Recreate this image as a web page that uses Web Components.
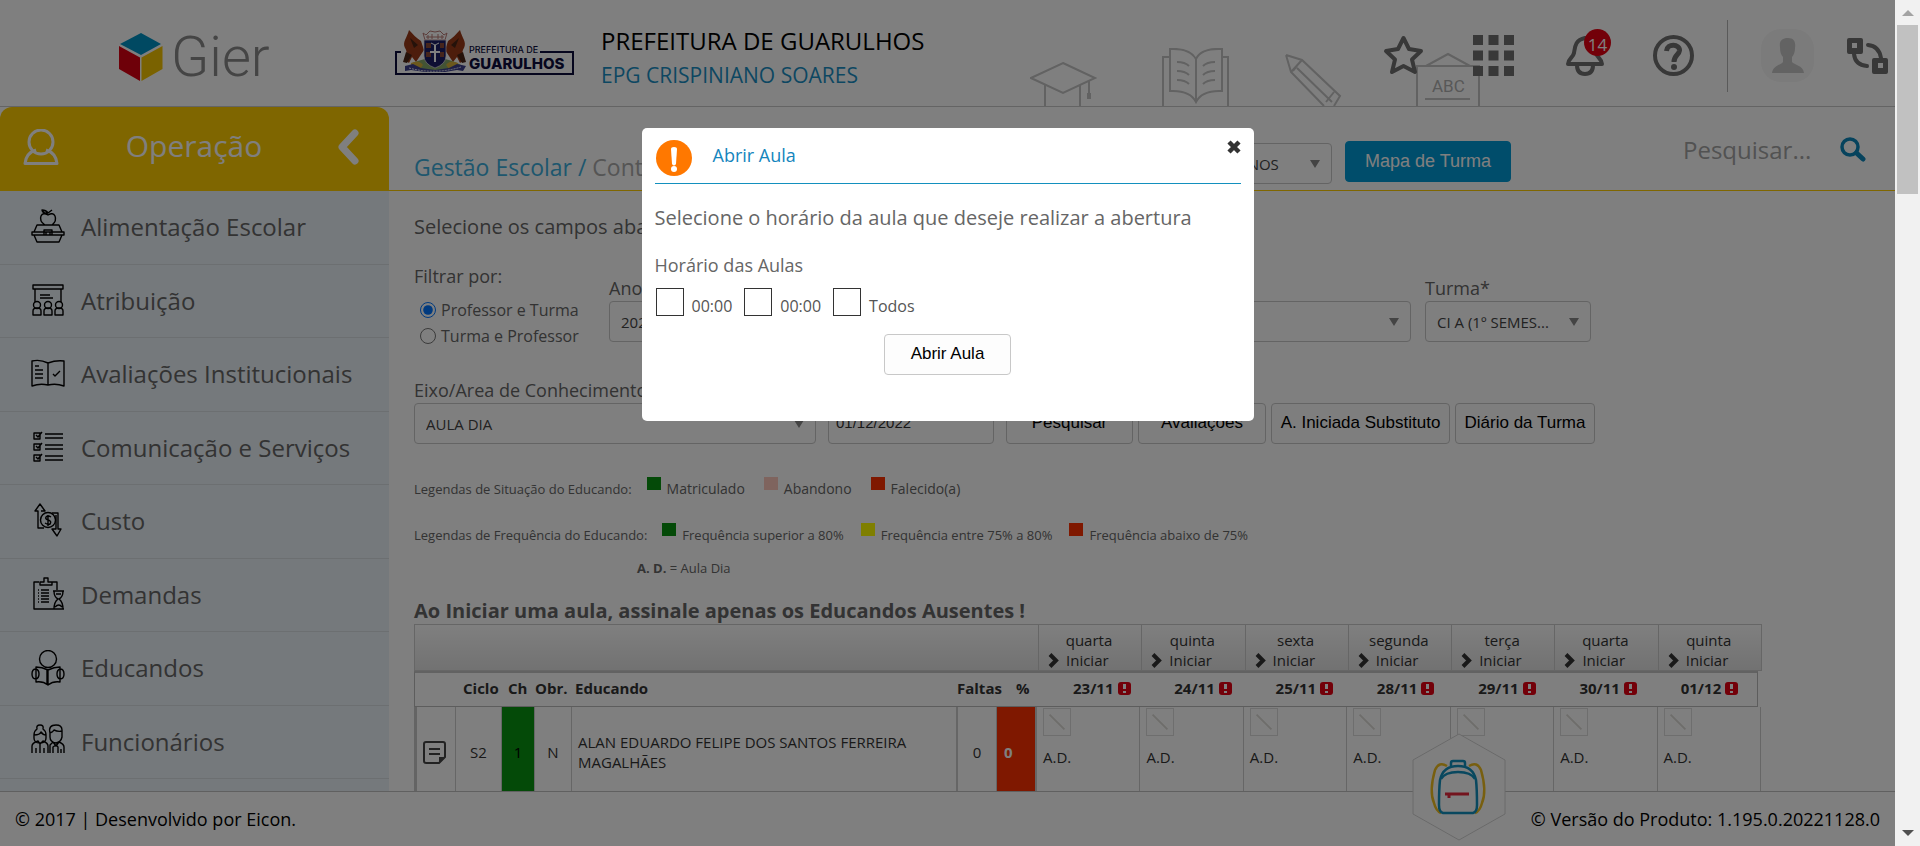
<!DOCTYPE html>
<html lang="pt-BR">
<head>
<meta charset="utf-8">
<title>Gier - Gestão Escolar</title>
<style>
html, body { margin: 0; height: 100%; }
body { font-family: "Open Sans", sans-serif; color: #666; background: #fff; overflow: hidden; }
</style>
</head>
<body>
<gier-app></gier-app>
<script>
const define = (name, html, setup) => {
  const tpl = document.createElement('template');
  tpl.innerHTML = '<style>*{box-sizing:border-box}button,input,select{font-family:inherit;margin:0}button{cursor:pointer}svg{display:block;fill:none}</style>' + html;
  customElements.define(name, class extends HTMLElement {
    constructor() {
      super();
      this.attachShadow({ mode: 'open' }).appendChild(tpl.content.cloneNode(true));
    }
    connectedCallback() { if (setup) setup(this, this.shadowRoot); }
  });
};

/* ---------- header ---------- */
define('gier-logo', `
<style>
:host { display: flex; align-items: center; gap: 8px; width: 153px; height: 48px; }
span { font: 300 56px/48px Roboto, sans-serif; color: #8a8a8a; }
</style>
<svg width="44" height="48" viewBox="0 0 44 48">
  <path fill="#0093c4" d="M22 0 42 11 22 22 1 11z"/>
  <path fill="#dc0012" d="M0 13 21 24.500V48L0 36z"/>
  <path fill="#f5c400" d="M43.500 13 22.500 24.500V48L43.500 36z"/>
</svg><span>Gier</span>`);

define('city-logo', `
<style>
:host { display: grid; grid-template-columns: 72px 1fr; width: 179px; height: 46px; position: relative; color: #0c0c3c; }
.frame { position: absolute; left: 0; top: 0; }
.name { grid-column: 2; align-self: end; display: flex; flex-direction: column; padding: 0 0 3px 2px; position: relative; }
small { font: 500 9px/11px Inter, sans-serif; white-space: nowrap; }
b { font: 800 15px/18px Inter, sans-serif; }
</style>
<svg class="frame" width="179" height="46" viewBox="0 0 179 46">
  <path stroke="#0c0c3c" stroke-width="2" d="M6 22H1V44H178V22H145"/>
  <path fill="#9a3a18" d="M14 0c4 4 7 8 12 11l3 9-8 12-4-5-3 6-4-3c2-7 2-9 0-12-3-6 2-10 4-18zM65 0c-4 4-7 8-12 11l-3 9 8 12 4-5 3 6 4-3c-2-7-2-9 0-12 3-6-2-10-4-18z"/>
  <path fill="#4a2414" d="M11 22l6 3-5 8-4-1zM68 22l-6 3 5 8 4-1zM15 8l8 7-4 3zM64 8l-8 7 4 3z"/>
  <path fill="#86a86a" d="M18 33q22-10 44 0l8 4-10 3H20l-8-2z"/>
  <path fill="#d6b13a" d="M16 33q8-4 12 2l-4 5h-8zM63 33q-8-4-12 2l4 5h8z"/>
  <path fill="#fff" stroke="#b87a75" d="M28 3l3 2 4-4 5 1 5-1 4 4 3-2-2 7H30z"/>
  <path stroke="#b87a75" d="M31 7h18M33 5v4M37 4v5M43 4v5M47 5v4"/>
  <path fill="#1c1f66" stroke="#e8e0e8" stroke-width=".7" d="M29 10h22v16q0 8-11 12-11-4-11-12z"/>
  <path fill="#8d4a38" d="M31 13h5v5h-5zM45 13h4v5h-4zM31 22h5v5h-5zM45 22h4v5h-4z"/>
  <path fill="#fff" d="M39 15h2v6h4v2h-4v9h-2v-9h-4v-2h4z"/>
  <path stroke="#fff" d="M36 13l4 2 4-2"/>
  <path fill="#3c3f8c" d="M10 36l8-2 8 4 14 2 14-2 8-4 9 2-3 5-6-1-12 2H30l-14-2-6 1z"/>
  <path stroke="#e8e8f4" stroke-dasharray="2 1" d="M14 38q26 7 52-1"/>
</svg>
<div class="name"><small>PREFEITURA DE</small><b>GUARULHOS</b></div>`);

define('gier-header', `
<style>
:host { display: flex; align-items: center; height: 107px; position: relative; border-bottom: 1px solid #c8c8c8; padding-right: 7px; }
gier-logo { margin-left: 119px; padding-top: 8px; }
city-logo { margin-left: 123px; }
.org { margin-left: 27px; display: flex; flex-direction: column; padding-top: 7px; }
h1 { margin: 0; font-size: 24px; line-height: 36px; font-weight: 400; color: #000; }
.org a { font-size: 21px; line-height: 32px; color: #1b8fc4; text-decoration: none; }
.decor { position: absolute; right: 415px; bottom: 0; stroke: #c4c4c4; stroke-width: 2; }
.tools { margin-left: auto; display: flex; align-items: center; gap: 33px; padding-top: 5px; position: relative; }
.group { display: flex; gap: 49px; }
button { border: 0; background: none; padding: 0; position: relative; display: block; }
hr { width: 1px; height: 72px; margin: 0; border: 0; background: #b4b4b4; }
.badge { position: absolute; left: 21px; top: -6px; width: 27px; height: 27px; border-radius: 50%; background: #e60012; color: #fff; font-size: 17px; line-height: 32px; text-align: center; }
</style>
<gier-logo></gier-logo>
<city-logo></city-logo>
<div class="org"><h1>PREFEITURA DE GUARULHOS</h1><a href="#">EPG CRISPINIANO SOARES</a></div>
<svg class="decor" width="450" height="58" viewBox="0 0 450 58">
  <path d="M33 15 65 30 33 45 1 30zM15 37V58M50 37V58M59 33V50"/><path stroke-width="4" d="M59 45v6"/>
  <path d="M139 9H133V58M193 9H198V58M140 1Q160 0 166 11Q171 0 192 1V43Q172 42 166 54Q160 42 140 43zM166 11V54M147 14q8 0 12 4M147 23q8 0 12 4M147 32q8 0 12 4M185 14q-8 0-12 4M185 23q-8 0-12 4M185 32q-8 0-12 4"/>
  <path d="M256 7 272 12 310 48 304 58M256 7 261 24 294 58M272 12 261 24M267 20 302 54M296 54 304 44M267 18 263 23"/>
  <path d="M387 58V18H449V58M396 18 418 6 440 18M395 51H440"/>
  <text x="402" y="44" fill="#b0b0b0" stroke="none" font-family="Roboto, sans-serif" font-size="17">ABC</text>
</svg>
<div class="tools">
  <div class="group">
    <button aria-label="Favoritos"><svg width="41" height="41" viewBox="0 0 41 41"><path stroke="#707070" stroke-width="4" stroke-linejoin="round" d="M20.500 3 26 14 38 16 29 24.500 32 37 20.500 31 9 37 12 24.500 3 16 15 14z"/></svg></button>
    <button aria-label="Aplicativos"><svg width="41" height="41" viewBox="0 0 41 41"><path fill="#707070" d="M0 0h10v10H0zM15.500 0h10v10h-10zM31 0h10v10H31zM0 15.500h10v10H0zM15.500 15.500h10v10h-10zM31 15.500h10v10H31zM0 31h10v10H0zM15.500 31h10v10h-10zM31 31h10v10H31z"/></svg></button>
    <button aria-label="Notificações"><svg width="41" height="41" viewBox="0 0 41 41"><path stroke="#707070" stroke-width="4" stroke-linejoin="round" d="M22 3C12 5 12 12 11 18 10 23 5 24 5 29H39C39 24 34 23 33 18 32 10 30 5 22 3zM14 30q0 9 8 9t8-9"/></svg><span class="badge">14</span></button>
    <button aria-label="Ajuda"><svg width="41" height="41" viewBox="0 0 41 41"><circle cx="20.500" cy="20.500" r="18.500" stroke="#707070" stroke-width="4"/><path stroke="#707070" stroke-width="5" d="M13.500 16C14 8 27 9 26.500 15.500 26 20 21 20 21 27"/><circle cx="21" cy="32" r="3" fill="#707070"/></svg></button>
  </div>
  <hr>
  <button aria-label="Perfil"><svg width="53" height="53" viewBox="0 0 53 53"><rect width="53" height="53" rx="20" fill="#f6f6f6"/><path fill="#c6c6c6" d="M27 9c6 0 8 4 7 10 0 5-2 8-3 9v5c2 3 11 3 12 11H11c1-8 9-8 11-11v-5c-2-2-3-5-3-10-1-6 2-9 8-9z"/></svg></button>
  <button aria-label="Trocar perfil"><svg width="41" height="36" viewBox="0 0 41 36"><path fill="#707070" fill-rule="evenodd" d="M2 0h12q2 0 2 2v12q0 2-2 2H2q-2 0-2-2V2q0-2 2-2zm3 5v5h5V5zM27 20h12q2 0 2 2v12q0 2-2 2H27q-2 0-2-2V22q0-2 2-2zm4 5v5h5v-5z"/><path stroke="#707070" stroke-width="4" stroke-linecap="round" d="M7 16q1 11 13 12M21 7q11 1 13 13"/></svg></button>
</div>`);

/* ---------- sidebar ---------- */
const S = 'stroke="#000" stroke-width="1.4" stroke-linejoin="round"';
const icons = {
  food: `<path ${S} d="M17 4q-2-3-6-3 1 4 6 3zm0 0 4-3M14 16q-6-4-4-9 2-4 7-1 5-3 7 1 2 5-3 9M6 16h22l3 7H3zM1 23h32v3H1zM3 26l3 7h22l3-7M13 26v-5h8v5M15 26v-3h4v3"/>`,
  board: `<path ${S} d="M2 2h30v4H2zM4 6v13M30 6v13M9 12h10M9 15h13M2 32v-4q0-3 4-3t4 3v4zM13 32v-4q0-3 4-3t4 3v4zM24 32v-4q0-3 4-3t4 3v4z"/><circle ${S} cx="6" cy="22" r="3.500"/><circle ${S} cx="17" cy="22" r="3.500"/><circle ${S} cx="28" cy="22" r="3.500"/>`,
  book: `<path ${S} d="M17 7Q9 3 1 5V30Q9 27 17 29 25 27 33 30V5Q25 4 17 7zM17 7V29M4 10h4M4 14h8M4 18h8M4 22h8M22 18l2 2 5-5"/>`,
  list: `<path ${S} d="M3 3h6v6H3zM3 14h6v6H3zM3 25h6v6H3zM5 5l2 2 4-5M5 16l2 2 4-5M5 27l2 2 4-5M14 4h18M14 8h18M14 15h18M14 19h18M14 26h18M14 30h18"/>`,
  cost: `<circle ${S} cx="17" cy="17" r="7.500"/><path ${S} d="M13 25H7V8H4L9 1l5 7h-4M21 10h6v16h3l-4 7-5-7h4V12M20 14q-3-2-5 0-1 2 2 3 4 1 2 4-2 1-5-1M17 12v11"/>`,
  tasks: `<path ${S} d="M8 5H3v27h29M21 5h5v8M9 8h12V5h-4V1h-4v4H9zM7 13h1M7 16h1M7 19h1M7 22h1M7 25h1M10 13h8M10 16h8M10 19h8M10 22h8M10 25h8M22 14h11M22 32h11M23 14q0 6 4 8-4 3-4 10M32 14q0 6-4 8 4 3 4 10M24 30q4-4 7 0M25 17h5"/>`,
  pupil: `<circle ${S} cx="17" cy="9" r="8.500"/><path ${S} d="M17 20Q11 17 5 17V32Q12 31 17 35 22 31 29 32V17Q23 17 17 20V35M16 20v15M5 19q-4 0-4 5t4 5q3-1 3-5t-3-5zM29 19q4 0 4 5t-4 5q-3-1-3-5t3-5z"/>`,
  staff: `<path ${S} d="M6 5q-1-4 3-4t3 4q3 2 3 6v3q0 5-6 5t-6-5v-3q0-4 3-6zM3 11q6 0 7-3 2 3 5 3M1 29v-7q0-3 6-5l2 3 3-3q5 2 5 5v7M5 29v-5M9 20v9M13 29v-5M19 9q-2-8 6-8 6 0 6 5v7q-1 5-6 6-6-1-6-6zM19 9q3-1 4-3 4 2 8 1M19 29v-8l3-3 3 4 3-4q5 2 5 5v6M22 29v-6l3-2 2 2v6M30 29v-4"/>`
};

define('gier-menu-item', `
<style>
:host { display: grid; border-bottom: 1px solid #d9dfe2; }
a { display: flex; align-items: center; gap: 16px; padding: 0 31px; color: #666; text-decoration: none; font-size: 24px; line-height: 32px; white-space: nowrap; }
</style>
<a href="#"><svg width="34" height="36" viewBox="0 0 34 36"></svg><slot></slot></a>`,
(el, root) => { root.querySelector('svg').innerHTML = icons[el.getAttribute('icon')]; });

define('gier-sidebar', `
<style>
:host { display: flex; flex-direction: column; width: 389px; background: #ebf2f8; overflow: hidden; }
header { background: #fff; flex: none; }
.tab { display: flex; align-items: center; justify-content: space-between; height: 84px; padding: 0 30px 4px 23px; border-radius: 12px 12px 0 0; background: #ffcc00; color: #fff; font-size: 30px; line-height: 36px; }
.tab span { padding: 0 8px 2px 0; }
button { border: 0; background: none; padding: 0; }
nav { display: grid; grid-template-rows: repeat(8, 1fr); flex: none; height: 588px; }
</style>
<header><div class="tab">
  <svg width="36" height="36" viewBox="0 0 36 36" stroke="#fff" stroke-width="3" stroke-linejoin="round"><path d="M13 21Q3 24 2 34.500H34Q33 24 23 21"/><ellipse cx="18" cy="13" rx="12" ry="12"/></svg>
  <span>Operação</span>
  <button aria-label="Recolher"><svg width="22" height="36" viewBox="0 0 22 36"><path stroke="#fff" stroke-width="7" stroke-linecap="round" stroke-linejoin="round" d="M18 4 5 18 18 32"/></svg></button>
</div></header>
<nav>
  <gier-menu-item icon="food">Alimentação Escolar</gier-menu-item>
  <gier-menu-item icon="board">Atribuição</gier-menu-item>
  <gier-menu-item icon="book">Avaliações Institucionais</gier-menu-item>
  <gier-menu-item icon="list">Comunicação e Serviços</gier-menu-item>
  <gier-menu-item icon="cost">Custo</gier-menu-item>
  <gier-menu-item icon="tasks">Demandas</gier-menu-item>
  <gier-menu-item icon="pupil">Educandos</gier-menu-item>
  <gier-menu-item icon="staff">Funcionários</gier-menu-item>
</nav>`);

/* ---------- form controls ---------- */
define('gier-select', `
<style>
:host { display: flex; flex-direction: column; }
label { font-size: 18px; line-height: 24px; margin-bottom: 1px; }
label:empty { display: none; }
.box { display: grid; align-items: center; }
.box > * { grid-area: 1 / 1; }
select { appearance: none; width: 100%; height: 41px; border: 1px solid #c8c8c8; border-radius: 4px; background: none; padding: 0 36px 0 11px; font-size: 15px; color: #444; text-overflow: ellipsis; }
svg { justify-self: end; margin-right: 12px; pointer-events: none; }
</style>
<label for="s"></label>
<div class="box"><select id="s"><option></option></select><svg width="10" height="8" viewBox="0 0 10 8"><path fill="#888" d="M0 0h10L5 8z"/></svg></div>`,
(el, root) => {
  root.querySelector('label').textContent = el.getAttribute('label') || '';
  root.querySelector('option').textContent = el.getAttribute('value') || '';
  if (!el.hasAttribute('label')) root.querySelector('select').setAttribute('aria-label', el.getAttribute('name') || 'Opção');
});

define('gier-button', `
<style>
:host { display: block; }
button { width: 100%; height: 41px; border: 1px solid #c8c8c8; border-radius: 4px; background: #fdfdfd; color: #000; font: 17px/20px "Liberation Sans", sans-serif; padding: 0 0 2px; white-space: nowrap; }
:host([primary]) button { background: #009ad6; border-color: #009ad6; color: #fff; font-size: 18px; }
</style><button><slot></slot></button>`);

define('gier-legend', `
<style>
:host { display: flex; gap: 15px; font-size: 13px; line-height: 20px; }
:host([large]) .items { font-size: 14px; gap: 19px; }
.items { display: flex; gap: 17px; }
.items span { display: flex; gap: 6px; }
i { width: 14px; height: 13px; margin-top: -2px; background: var(--c); }
</style><slot></slot><div class="items"></div>`,
(el, root) => {
  root.querySelector('.items').innerHTML = el.getAttribute('items').split('|').map(t => {
    const [c, text] = t.split('=');
    return '<span><i style="--c:' + c + '"></i>' + text + '</span>';
  }).join('');
});

/* ---------- attendance grid ---------- */
const days = [['quarta','23/11'],['quinta','24/11'],['sexta','25/11'],['segunda','28/11'],['terça','29/11'],['quarta','30/11'],['quinta','01/12']];
define('gier-attendance', `
<style>
:host { display: block; color: #333; font-size: 15px; line-height: 20px; }
table, thead, tbody { display: block; }
tr { display: grid; }
th, td { padding: 0; text-align: left; }
.days { grid-template-columns: 623px repeat(7, 1fr); height: 47px; border: 1px solid #ccc; background: linear-gradient(#fff, #e4e4e4); }
.days th { font-weight: 400; border-left: 1px solid #ccc; padding: 5px 0 0 9px; }
.days th:first-child { border: 0; }
.days .d { display: grid; grid-template-columns: 18px 48px; row-gap: 0; line-height: 20px; }
.days .d span { grid-column: 1 / 3; justify-self: center; padding-left: 16px; width: 84px; text-align: center; }
.days button { grid-column: 1 / 3; display: flex; align-items: center; gap: 7px; border: 0; background: none; padding: 0; font-size: 15px; line-height: 20px; color: #333; }
.cols { grid-template-columns: 48px 45px 27px 40px 382px 59px 32px repeat(7, 1fr); height: 36px; margin-right: 4px; border: 1px solid #bbb; border-top: 2px solid #c4c4c4; align-items: center; padding-bottom: 3px; }
.cols .date { display: flex; align-items: center; gap: 4px; padding-left: 25px; }
.row { grid-template-columns: 39px 46px 33px 37px 386px 39px 40px repeat(7, 1fr); height: 90px; margin-right: 1px; border-left: 3px solid #c8c8c8; }
.row td { display: grid; align-items: center; justify-content: center; border-right: 1px solid #ccc; }
.row .note { padding: 0 3px 0 0; }
.row .ch { background: #089410; color: #000; }
.row .name { justify-content: start; padding: 0 30px 0 6px; border-right-width: 2px; }
.row .pct { background: #ff3000; color: #fff; font-weight: 700; justify-content: start; padding-left: 7px; border-right-width: 2px; }
.row .day { align-content: start; justify-content: start; padding: 1px 0 0 6px; row-gap: 11px; }
.day svg { border: 1px solid #dcdcdc; }
</style>
<table>
  <thead><tr class="days"><th></th></tr>
  <tr class="cols"><th></th><th>Ciclo</th><th>Ch</th><th>Obr.</th><th>Educando</th><th>Faltas</th><th>%</th></tr></thead>
  <tbody><tr class="row"><td class="note"><svg width="23" height="23" viewBox="0 0 23 23"><path stroke="#444" stroke-width="2" stroke-linejoin="round" d="M3 1H20Q22 1 22 3V16L16 22H3Q1 22 1 20V3Q1 1 3 1zM6 8H17M6 13H17"/><path fill="#444" d="M16 16h6l-6 6z"/></svg></td><td>S2</td><td class="ch">1</td><td>N</td><td class="name">ALAN EDUARDO FELIPE DOS SANTOS FERREIRA MAGALHÃES</td><td>0</td><td class="pct">0</td></tr></tbody>
</table>`,
(el, root) => {
  const add = (sel, fn) => root.querySelector(sel).insertAdjacentHTML('beforeend', days.map(fn).join(''));
  add('.days', d => '<th><div class="d"><span>' + d[0] + '</span><button><svg width="11" height="15" viewBox="0 0 11 15"><path stroke="#333" stroke-width="4" d="M2 1.500 8 7.500 2 13.500"/></svg>Iniciar</button></div></th>');
  add('.cols', d => '<th><div class="date">' + d[1] + '<svg width="13" height="13" viewBox="0 0 13 13"><rect width="13" height="13" rx="3" fill="#e60012"/><path fill="#fff" d="M5 2h3v5H5zM5 9h3v2H5z"/></svg></div></th>');
  add('.row', () => '<td class="day"><svg width="28" height="28" viewBox="0 0 28 28"><path stroke="#dcdad6" stroke-width="2" d="M6 6 22 22"/></svg><span>A.D.</span></td>');
});

/* ---------- content ---------- */
define('gier-content', `
<style>
:host { display: flex; flex-direction: column; min-width: 0; overflow: hidden; }
.top { display: flex; flex: none; height: 84px; border-bottom: 1px solid #ffcc00; padding-left: 25px; align-items: flex-start; white-space: nowrap; }
.crumb { flex: 1; min-width: 0; font-size: 23px; line-height: 32px; padding-top: 44px; color: #aaa; }
.crumb a { color: #3caedc; text-decoration: none; }
.top gier-select { width: 203px; margin: 36px 13px 0 0; }
.top gier-button { width: 166px; margin-top: 34px; }
.search { display: flex; margin: 27px 29px 0 172px; gap: 18px; }
.search input { width: 139px; border: 0; padding: 0; background: none; font-size: 24px; line-height: 32px; outline: 0; }
.search input::placeholder { color: #a4a4a4; }
.search button { border: 0; background: none; padding: 0; }
.body { padding: 20px 133px 0 25px; }
p { margin: 0; font-size: 20px; line-height: 32px; }
form { display: flex; flex-direction: column; }
.r1 { display: flex; gap: 14px; margin-top: 21px; align-items: flex-start; }
fieldset { border: 0; margin: 0; padding: 0; width: 181px; font-size: 18px; }
legend { padding: 0; line-height: 24px; margin-bottom: 9px; }
fieldset label { display: flex; align-items: center; gap: 5px; font-size: 16px; line-height: 26px; padding-left: 6px; }
fieldset input { width: 16px; height: 16px; }
.r1 gier-select { margin-top: 12px; }
.ano { width: 130px; } .prof { width: 658px; } .turma { width: 166px; }
.r2 { display: flex; gap: 5px; align-items: flex-end; margin-top: 29px; }
.eixo { width: 402px; margin-right: 7px; }
.date { width: 166px; height: 40px; border: 1px solid #c8c8c8; border-radius: 4px; padding: 0 7px 4px; margin-right: 7px; font: 15px "Liberation Sans", sans-serif; color: #333; background: none; }
.b1 { width: 127px; } .b2 { width: 128px; } .b3 { width: 179px; } .b4 { width: 140px; }
.l1 { margin-top: 35px; } .l2 { margin-top: 26px; }
.key { font-size: 13px; line-height: 20px; margin: 13px 0 0 223px; }
h2 { margin: 20px 0 0; font-size: 20px; line-height: 26px; }
</style>
<div class="top">
  <div class="crumb"><a href="#">Gestão Escolar /</a> Controle</div>
  <gier-select name="Público" value="TODOS OS ALUNOS"></gier-select>
  <gier-button primary>Mapa de Turma</gier-button>
  <div class="search"><input type="text" placeholder="Pesquisar..." aria-label="Pesquisar"><button aria-label="Buscar"><svg width="26" height="26" viewBox="0 0 26 26"><circle cx="10" cy="10" r="8" stroke="#0d87bb" stroke-width="3.500"/><path stroke="#0d87bb" stroke-width="5" stroke-linecap="round" d="M16.500 16 23 22"/></svg></button></div>
</div>
<div class="body">
  <p>Selecione os campos aba</p>
  <form>
    <div class="r1">
      <fieldset><legend>Filtrar por:</legend>
        <label><input type="radio" name="f" checked>Professor e Turma</label>
        <label><input type="radio" name="f">Turma e Professor</label>
      </fieldset>
      <gier-select class="ano" label="Ano" value="2022"></gier-select>
      <gier-select class="prof" label="Professor*" value=""></gier-select>
      <gier-select class="turma" label="Turma*" value="CI A (1º SEMES..."></gier-select>
    </div>
    <div class="r2">
      <gier-select class="eixo" label="Eixo/Area de Conhecimento" value="AULA DIA"></gier-select>
      <input class="date" type="text" value="01/12/2022" aria-label="Data">
      <gier-button class="b1">Pesquisar</gier-button>
      <gier-button class="b2">Avaliações</gier-button>
      <gier-button class="b3">A. Iniciada Substituto</gier-button>
      <gier-button class="b4">Diário da Turma</gier-button>
    </div>
  </form>
  <gier-legend large class="l1" items="#089410=Matriculado|#ffc8bc=Abandono|#ff3000=Falecido(a)">Legendas de Situação do Educando:</gier-legend>
  <gier-legend class="l2" items="#089410=Frequência superior a 80%|#ffff00=Frequência entre 75% a 80%|#ff3000=Frequência abaixo de 75%">Legendas de Frequência do Educando:</gier-legend>
  <div class="key"><b>A. D.</b> = Aula Dia</div>
  <h2>Ao Iniciar uma aula, assinale apenas os Educandos Ausentes !</h2>
  <gier-attendance></gier-attendance>
</div>`);

/* ---------- footer ---------- */
define('gier-footer', `
<style>
:host { display: flex; justify-content: space-between; height: 55px; border-top: 1px solid #c0c0c0; padding: 13px 15px 0; background: #fff; color: #000; font-size: 18px; line-height: 28px; position: relative; }
a { position: absolute; right: 389px; bottom: 5px; }
</style>
<span>© 2017 | Desenvolvido por Eicon.</span>
<a href="#" aria-label="Mochila"><svg width="94" height="108" viewBox="0 0 94 108">
  <path fill="#fff" stroke="#d4d4d4" d="M47 1 93 27V81L47 107 1 81V27z"/>
  <g stroke-width="2.500"><path stroke="#f0be1e" d="M35 33Q27 28 23 37 17 58 22 70 24 78 29 80M57 33Q65 28 69 37 75 58 70 70 68 78 63 80"/>
  <path stroke="#1390be" fill="#fff" d="M31 80Q27 79 27 72 27 56 28 47 31 33 46 33 61 33 64 47 65 56 65 72 65 79 61 80z"/>
  <path stroke="#1390be" d="M29 46Q33 39 46 39T63 46M39 33V30Q39 28 41 28H51Q53 28 53 30V33"/></g>
  <path stroke="#e6283c" stroke-width="3" d="M33 61H57M37 61V65"/>
</svg></a>
<span>© Versão do Produto: 1.195.0.20221128.0</span>`);

/* ---------- scrollbar ---------- */
define('gier-scrollbar', `
<style>
:host { display: flex; flex-direction: column; align-items: center; width: 25px; background: #f1f1f1; }
.up { margin: 10px 0 9px; }
.thumb { width: 21px; height: 169px; background: #c1c1c1; }
.down { margin: auto 0 10px; }
</style>
<svg class="up" width="12" height="6" viewBox="0 0 12 6"><path fill="#a3a3a3" d="M0 6 6 0l6 6z"/></svg>
<div class="thumb"></div>
<svg class="down" width="12" height="6" viewBox="0 0 12 6"><path fill="#505050" d="M0 0h12L6 6z"/></svg>`);

/* ---------- dialog ---------- */
define('gier-dialog', `
<style>
:host { display: flex; justify-content: center; align-items: flex-start; padding-top: 128px; background: rgba(0, 0, 0, .5); }
section { width: 612px; min-height: 293px; background: #fff; border-radius: 5px; padding: 12px 13px 46px; display: flex; flex-direction: column; }
header { display: flex; border-bottom: 1px solid #1390be; height: 44px; padding-left: 1px; }
h3 { flex: 1; margin: 3px 0 0 21px; font-size: 18px; line-height: 24px; font-weight: 400; color: #1485bd; }
.x { border: 0; background: none; padding: 0; height: 14px; }
p { margin: 18px 0 0; font-size: 20px; line-height: 32px; }
h4 { margin: 19px 0 0; font-size: 18px; line-height: 24px; font-weight: 400; }
.opts { display: flex; gap: 12px; padding: 11px 0 0 1px; font-size: 16px; color: #555; }
label { display: flex; gap: 8px; line-height: 36px; height: 30px; }
input { appearance: none; width: 28px; height: 28px; border: 1px solid #333; background: #fff; }
gier-button { width: 127px; align-self: center; margin-top: 16px; }
</style>
<section role="dialog" aria-label="Abrir Aula">
  <header><svg width="36" height="36" viewBox="0 0 36 36"><circle cx="18" cy="18" r="18" fill="#ff7800"/><path fill="#fff" d="M15 9q0-2 3-2t3 2l-1 15q-2 3-4 0z"/><circle cx="18" cy="29" r="3" fill="#fff"/></svg>
  <h3>Abrir Aula</h3>
  <button class="x" aria-label="Fechar"><svg width="14" height="14" viewBox="0 0 14 14"><path stroke="#333" stroke-width="4.500" d="M2 2 12 12M12 2 2 12"/></svg></button></header>
  <p>Selecione o horário da aula que deseje realizar a abertura</p>
  <h4>Horário das Aulas</h4>
  <div class="opts"><label><input type="checkbox">00:00</label><label><input type="checkbox">00:00</label><label><input type="checkbox">Todos</label></div>
  <gier-button>Abrir Aula</gier-button>
</section>`);

/* ---------- page ---------- */
define('gier-app', `
<style>
:host { display: grid; grid-template-columns: 1fr 25px; height: 100vh; }
.page { display: grid; grid-template: auto minmax(0, 1fr) auto / auto minmax(0, 1fr); min-width: 0; min-height: 0; position: relative; }
gier-header, gier-footer { grid-column: 1 / 3; }
gier-dialog { position: absolute; inset: 0; }
</style>
<div class="page"><gier-header></gier-header><gier-sidebar></gier-sidebar><gier-content></gier-content><gier-footer></gier-footer><gier-dialog></gier-dialog></div>
<gier-scrollbar></gier-scrollbar>`);
</script>
</body>
</html>
